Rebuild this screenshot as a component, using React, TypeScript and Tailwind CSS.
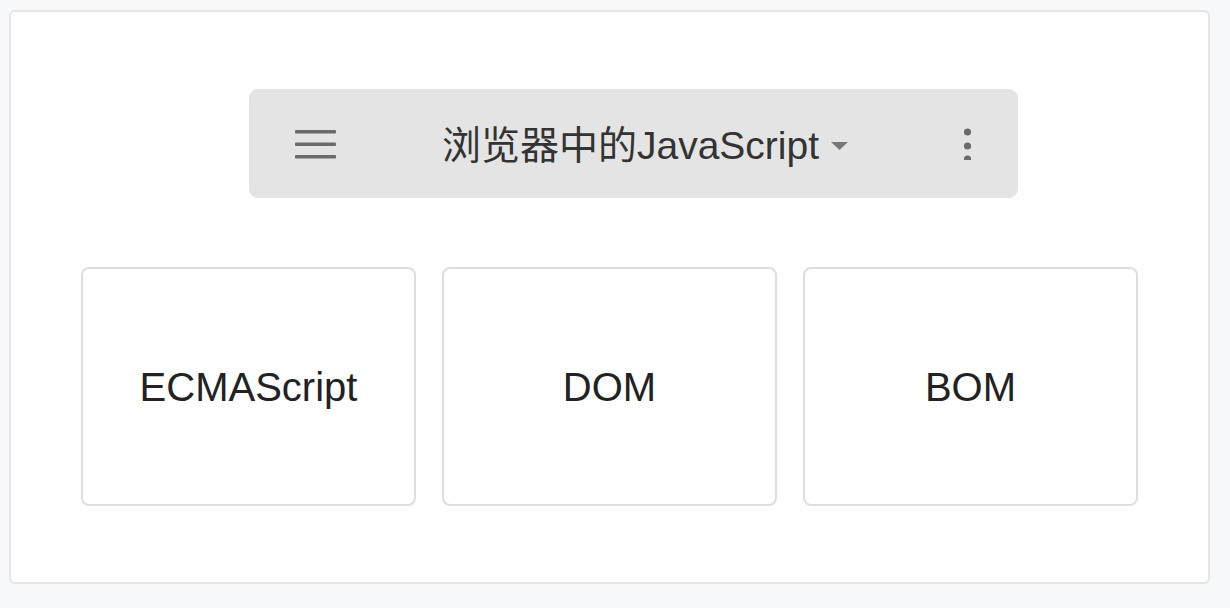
import React from 'react';

const items = ['ECMAScript', 'DOM', 'BOM'];

const font = { fontFamily: '"Liberation Sans", "Noto Sans CJK SC", sans-serif' };

export default function App() {
    return (
        <div className="min-h-[608px] w-[1230px] bg-[#f7f8fa] pl-[9px] pr-[20px] pt-[10px] pb-[24px]" style={font}>
            <div className="h-[574px] rounded-[6px] border-2 border-[#e4e5e7] bg-white px-[70px] pt-[77px]">
                <div className="ml-[168px] flex h-[109px] w-[769px] items-center rounded-[9px] bg-[#e4e4e4] pl-[46px] pr-[44px]">
                    <svg width="41" height="30" viewBox="0 0 41 30" className="shrink-0">
                        <rect x="0" y="1" width="41" height="3.5" rx="1" fill="#6b6b6b" />
                        <rect x="0" y="13.5" width="41" height="3.5" rx="1" fill="#6b6b6b" />
                        <rect x="0" y="26" width="41" height="3.5" rx="1" fill="#6b6b6b" />
                    </svg>
                    <div className="flex flex-1 items-center justify-center pt-[4px] pr-[10px]">
                        <span className="text-[39px] leading-none text-[#333]">浏览器中的JavaScript</span>
                        <svg width="17" height="9" viewBox="0 0 17 9" className="ml-[12px] mt-[1px]">
                            <path d="M0 0 L17 0 L8.5 8 Z" fill="#777" />
                        </svg>
                    </div>
                    <svg width="10" height="32" viewBox="0 0 10 32" className="shrink-0">
                        <circle cx="3.5" cy="4" r="3.6" fill="#6b6b6b" />
                        <circle cx="3.5" cy="18" r="3.6" fill="#6b6b6b" />
                        <circle cx="3.5" cy="31" r="3.6" fill="#6b6b6b" />
                    </svg>
                </div>
                <div className="mt-[69px] grid grid-cols-3 gap-[26px]">
                    {items.map((t) => (
                        <div
                            key={t}
                            className="flex h-[239px] items-center justify-center rounded-[8px] border-2 border-[#dedede] bg-white"
                        >
                            <span className="text-[40px] leading-none text-[#222]">{t}</span>
                        </div>
                    ))}
                </div>
            </div>
        </div>
    );
}
